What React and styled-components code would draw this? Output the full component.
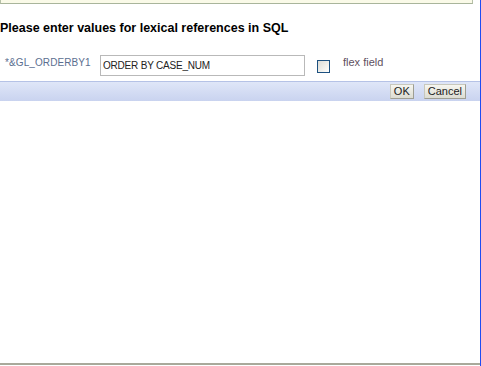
import React from "react";
import styled, { createGlobalStyle } from "styled-components";

const GlobalStyle = createGlobalStyle`
  html, body {
    margin: 0;
    padding: 0;
    background: #ffffff;
  }
  body {
    font-family: "Liberation Sans", Arial, sans-serif;
  }
`;

const Window = styled.div`
  width: 480px;
  height: 366px;
  border-right: 1px solid #1f4cf2;
  display: flex;
  flex-direction: column;
  overflow: hidden;
`;

const Body = styled.div`
  flex: 1;
  display: flex;
  flex-direction: column;
  border-bottom: 2px solid #a9a99b;
  margin-bottom: 1px;
`;

const Notice = styled.div`
  width: 473px;
  height: 4px;
  background: #fafae8;
  border-left: 1px solid #b6c0a8;
  border-right: 1px solid #b6c0a8;
  border-bottom: 1px solid #a9b59b;
  box-sizing: border-box;
`;

const Heading = styled.h2`
  margin: 16px 0 0 0;
  font-size: 12.5px;
  font-weight: bold;
  color: #000000;
  line-height: 16px;
`;

const Form = styled.div`
  display: flex;
  align-items: flex-start;
  padding: 19px 0 0 5px;
  height: 21px;
`;

const Label = styled.span`
  width: 95px;
  margin-top: 2px;
  font-size: 10px;
  letter-spacing: 0.1px;
  color: #5b6e8f;
`;

const TextInput = styled.input`
  width: 205px;
  height: 21px;
  box-sizing: border-box;
  border: 1px solid #b9b9b9;
  padding: 0 2px;
  font-family: "Liberation Sans", Arial, sans-serif;
  font-size: 10px;
  letter-spacing: -0.2px;
  color: #222222;
  outline: none;
`;

const CheckBox = styled.span`
  width: 13px;
  height: 13px;
  margin: 5px 0 0 12px;
  box-sizing: border-box;
  border: 1px solid #1d5180;
  background: linear-gradient(135deg, #dcdcd6 0%, #f4f4f0 70%, #ffffff 100%);
`;

const CheckLabel = styled.span`
  margin: 1px 0 0 13px;
  font-size: 11px;
  color: #5e5060;
`;

const ButtonBar = styled.div`
  margin-top: 5px;
  height: 19px;
  border-top: 1px solid #b5c2e6;
  background: linear-gradient(#dfe6f8, #c9d3ef);
  display: flex;
  justify-content: flex-end;
  align-items: center;
  gap: 10px;
  padding-right: 14px;
`;

const Button = styled.button`
  height: 15px;
  padding: 0 3px;
  border: 1px solid #c8c8bc;
  border-right-color: #9e9e92;
  border-bottom-color: #9e9e92;
  background: linear-gradient(#f6f6f0, #dcdcd2);
  font-family: "Liberation Sans", Arial, sans-serif;
  font-size: 11px;
  line-height: 13px;
  color: #222222;
`;

export default function App() {
  return (
    <>
      <GlobalStyle />
      <Window>
        <Body>
          <Notice />
          <Heading>Please enter values for lexical references in SQL</Heading>
          <Form>
            <Label>*&amp;GL_ORDERBY1</Label>
            <TextInput defaultValue="ORDER BY CASE_NUM" />
            <CheckBox />
            <CheckLabel>flex field</CheckLabel>
          </Form>
          <ButtonBar>
            <Button>OK</Button>
            <Button>Cancel</Button>
          </ButtonBar>
        </Body>
      </Window>
    </>
  );
}
